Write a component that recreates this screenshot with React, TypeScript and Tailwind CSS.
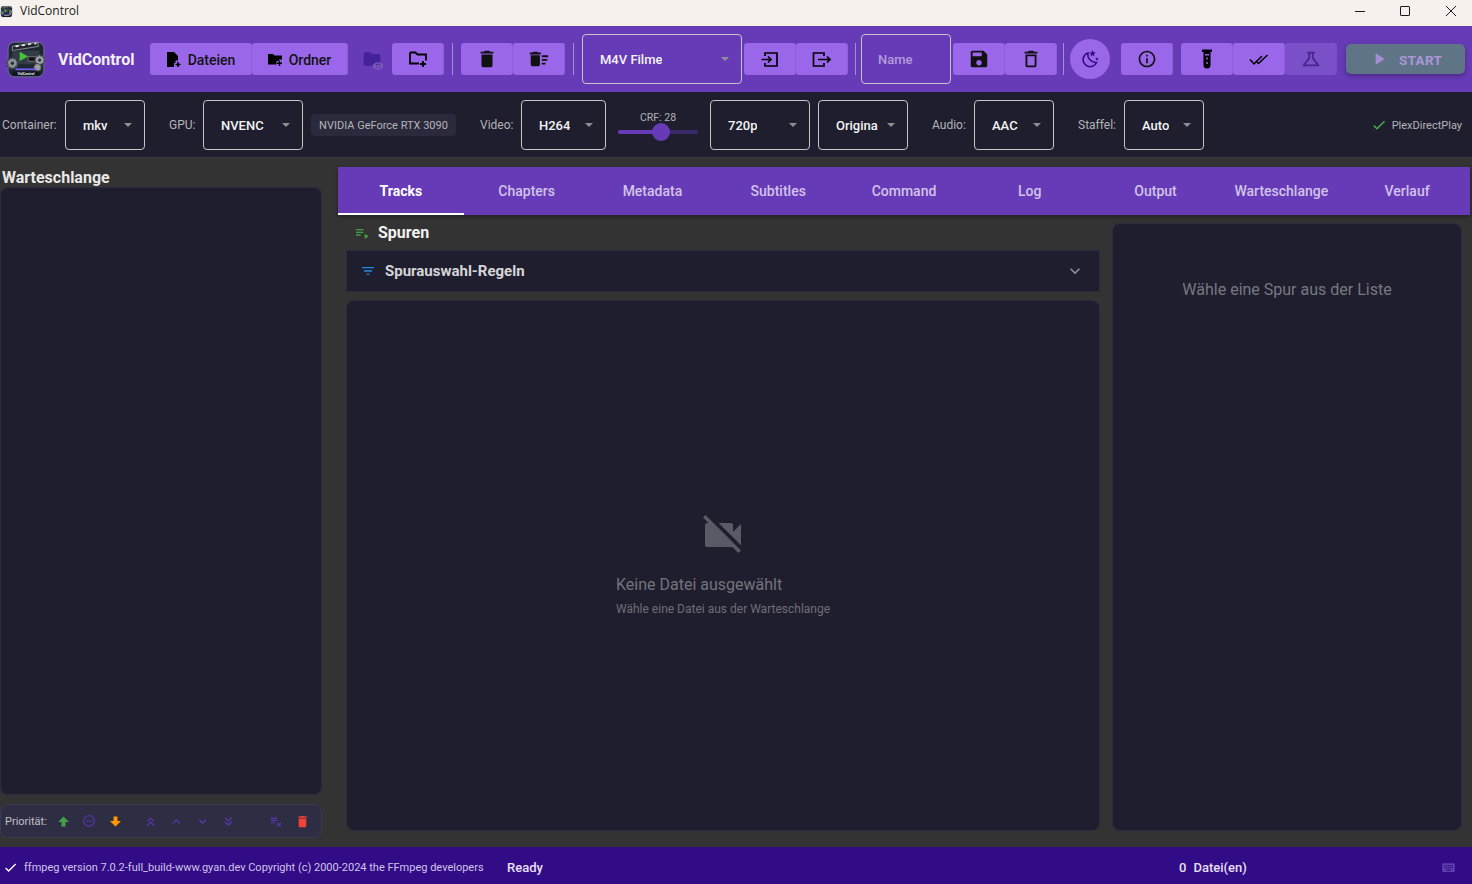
import type { ReactNode } from "react";
import {
  MdDelete,
  MdDeleteSweep,
  MdOutlineDelete,
  MdSave,
  MdOutlineInfo,
  MdOutlineScience,
  MdPlayArrow,
  MdCheck,
  MdFilterList,
  MdPlaylistPlay,
  MdVideocamOff,
  MdRemoveCircleOutline,
  MdKeyboardDoubleArrowUp,
  MdKeyboardDoubleArrowDown,
  MdKeyboardArrowUp,
  MdKeyboardArrowDown,
  MdPlaylistRemove,
  MdKeyboard,
  MdExpandMore,
  MdFolder,
  MdVisibility,
} from "react-icons/md";

const tabs = ["Tracks", "Chapters", "Metadata", "Subtitles", "Command", "Log", "Output", "Warteschlange", "Verlauf"];

const Logo = ({ size }: { size: number }) => (
  <svg width={size} height={size} viewBox="0 0 40 40">
    <rect x="3" y="4" width="34" height="33" rx="6" fill="#1d2733" stroke="#7d8791" strokeWidth="0.7" />
    <path d="M7 8 31 4l1 4-25 4z" fill="#20252b" stroke="#c8ccd0" strokeWidth="0.6" />
    <path d="M10 8l3-.5M16 7l3-.5M22 6l3-.5M28 5.500l2-.3" stroke="#e8e8e8" strokeWidth="1.600" />
    <rect x="7" y="12" width="26" height="13" fill="#333c44" />
    <path d="M14 13v9l8-4.500z" fill="#45c33a" />
    <rect x="22" y="18" width="8" height="4" fill="#111" stroke="#ccc" strokeWidth="0.4" />
    <circle cx="7" cy="24" r="5" fill="#8d9298" stroke="#3b4046" strokeWidth="2" strokeDasharray="2 1" />
    <circle cx="7" cy="24" r="1.600" fill="#2a2f35" />
    <circle cx="33" cy="21" r="4.500" fill="#9ba0a5" stroke="#444" strokeWidth="1.600" strokeDasharray="2 1" />
    <circle cx="33" cy="21" r="1.500" fill="#2a2f35" />
    <circle cx="31" cy="28" r="3.500" fill="#9ba0a5" stroke="#444" strokeWidth="1.400" strokeDasharray="2 1" />
    <rect x="10" y="29" width="20" height="1.600" fill="#7a5cf0" />
    <rect x="7" y="32" width="26" height="4" rx="1.500" fill="#0f1822" />
    <text x="20" y="35.300" fontSize="3.400" fontWeight="700" textAnchor="middle" fill="#e6e6e6" fontFamily="Roboto, sans-serif">
      VidControl
    </text>
  </svg>
);

const FileAdd = () => (
  <svg width="15" height="15" viewBox="0 0 15 15" fill="black">
    <path d="M1 0h7l4 4v4.500H9.500V11H8v4H1z" />
    <path d="M12 10v5M9.500 12.500h5" stroke="black" strokeWidth="1.500" />
  </svg>
);

const FolderAdd = () => (
  <svg width="15" height="13" viewBox="0 0 15 13" fill="black">
    <path d="M0 1h5l1.500 1.500H14V6.500h-3V8H8.500v3.500H0z" />
    <path d="M11.500 7.500v5.500M9 10.250h5" stroke="black" strokeWidth="1.500" />
  </svg>
);

const FolderAddOutline = () => (
  <svg width="18" height="16" viewBox="0 0 18 16" fill="none" stroke="black" strokeWidth="1.800">
    <path d="M1 1.500h5.500l2 2H17v6M1 1.500v11h9" />
    <path d="M14 10v6M11 13h6" />
  </svg>
);

const BoxIn = () => (
  <svg width="17" height="15" viewBox="0 0 17 15" fill="none" stroke="black" strokeWidth="1.700">
    <path d="M4 4V1h12v13H4v-3" />
    <path d="M0.500 7.500H10M7 4.500l3 3-3 3" />
  </svg>
);

const BoxOut = () => (
  <svg width="19" height="15" viewBox="0 0 19 15" fill="none" stroke="black" strokeWidth="1.700">
    <path d="M12 4V1H1.500v13H12v-3" />
    <path d="M6 7.500h12M15 4.500l3 3-3 3" />
  </svg>
);

const MoonStars = () => (
  <svg width="20" height="20" viewBox="0 0 20 20" fill="none">
    <path d="M8 4a7 7 0 1 0 8.500 9.500 8 8 0 0 1-8.500-9.500z" stroke="#320b86" strokeWidth="1.500" />
    <path d="M12.500 1l.9 2.300 2.400.2-1.800 1.500.6 2.400-2.100-1.300-2.100 1.300.6-2.400L9.200 3.500l2.400-.2zM17 8l.5 1.200 1.300.1-1 .9.300 1.300-1.100-.7-1.100.7.300-1.300-1-.9 1.300-.1z" fill="#320b86" />
  </svg>
);

const DoubleCheck = () => (
  <svg width="20" height="13" viewBox="0 0 20 13" fill="none" stroke="black" strokeWidth="1.500">
    <path d="M1 6.500l4 4.500 8-8" />
    <path d="M7 8l2.500 2.500L18.500 2" />
  </svg>
);

const TestTube = () => (
  <svg width="16" height="20" viewBox="0 0 16 20" fill="black">
    <rect x="3" y="0.500" width="10" height="2.500" />
    <path d="M4.500 3h7v13a3.500 3.500 0 0 1-7 0z" />
    <rect x="6" y="5" width="4" height="1.500" fill="#9a67ea" />
    <circle cx="8" cy="9.500" r="1" fill="#9a67ea" />
    <circle cx="8" cy="14" r="1" fill="#9a67ea" />
  </svg>
);

const ThickUp = () => (
  <svg width="11" height="11" viewBox="0 0 11 11" fill="#43a047">
    <path d="M5.500 0.500 11 6H7.500v4.500h-4V6H0z" />
  </svg>
);

const ThickDown = () => (
  <svg width="11" height="11" viewBox="0 0 11 11" fill="#ff9800">
    <path d="M5.500 10.500 11 5H7.500V0.500h-4V5H0z" />
  </svg>
);

const ToolButton = ({ children, className = "w-[52px]" }: { children: ReactNode; className?: string }) => (
  <div className={`h-8 bg-[#9a67ea] rounded-[3px] flex items-center justify-center text-[#111] border-r border-[#8f5ede] ${className}`}>
    {children}
  </div>
);

const Divider = () => <div className="w-px h-8 bg-[#a48bd2] shrink-0" />;

const Arrow = () => (
  <div className="w-0 h-0 border-x-[4px] border-x-transparent border-t-[4px] border-t-[#8e8e93] shrink-0" />
);

const Select = ({ value, className, pad = "pl-[17px]" }: { value: string; className: string; pad?: string }) => (
  <div className={`h-[50px] rounded-[4px] border border-[#c6c6c8] flex items-center justify-between pr-[12px] text-[13px] font-medium text-[#f4f4f4] shrink-0 ${pad} ${className}`}>
    <span className="overflow-hidden whitespace-nowrap pt-[2px]">{value}</span>
    <Arrow />
  </div>
);

const Label = ({ children, className = "" }: { children: ReactNode; className?: string }) => (
  <span className={`text-xs pt-[1px] text-[#b4b4b8] shrink-0 ${className}`}>{children}</span>
);

const PrioIcon = ({ children, className = "" }: { children: ReactNode; className?: string }) => (
  <div className={`w-[26px] flex justify-center ${className}`}>{children}</div>
);

export default function App() {
  return (
    <div className="h-screen w-full flex flex-col overflow-hidden bg-[#333333] font-['Roboto',sans-serif]">
      {/* window title */}
      <div className="h-[26px] bg-[#f6f1ec] flex items-center shrink-0 pb-[4px]">
        <Logo size={13} />
        <span className="ml-[7px] text-xs text-[#1a1a1a] font-['Open_Sans',sans-serif]">VidControl</span>
        <div className="ml-auto flex items-center text-[#1a1a1a]">
          <div className="w-[10px] h-px bg-[#1a1a1a] mr-[35px]" />
          <div className="w-[10px] h-[10px] border border-[#1a1a1a] rounded-[1px] mr-[35px]" />
          <svg width="12" height="12" viewBox="0 0 12 12" className="mr-[15px]">
            <path d="M1 1l10 10M11 1 1 11" stroke="#1a1a1a" strokeWidth="1" />
          </svg>
        </div>
      </div>

      {/* toolbar */}
      <div className="h-[66px] bg-[#673ab7] flex items-center shrink-0 pl-[5px]">
        <Logo size={42} />
        <span className="ml-[11px] w-[92px] pt-[2px] text-base font-bold text-[#f4f0fa]">VidControl</span>
        <ToolButton className="w-[102px] gap-[7px] text-sm font-medium">
          <FileAdd />
          <span className="pt-[1px]">Dateien</span>
        </ToolButton>
        <ToolButton className="w-[96px] gap-[6px] text-sm font-medium">
          <FolderAdd />
          <span className="pt-[1px]">Ordner</span>
        </ToolButton>
        <div className="relative w-[44px] h-8 pl-[4px] flex items-center justify-center text-[#45229a]">
          <MdFolder size={20} />
          <MdVisibility size={12} className="absolute left-[24px] top-[17px] text-[#7a5cb8]" />
        </div>
        <ToolButton>
          <FolderAddOutline />
        </ToolButton>
        <div className="w-2" />
        <Divider />
        <div className="w-2" />
        <ToolButton>
          <MdDelete size={22} />
        </ToolButton>
        <ToolButton>
          <MdDeleteSweep size={22} />
        </ToolButton>
        <div className="w-2" />
        <Divider />
        <div className="w-2" />
        <Select value="M4V Filme" className="w-[160px]" />
        <div className="w-[2px]" />
        <ToolButton>
          <BoxIn />
        </ToolButton>
        <ToolButton>
          <BoxOut />
        </ToolButton>
        <div className="w-[7px]" />
        <Divider />
        <div className="w-[5px]" />
        <div className="w-[90px] h-[50px] rounded-[4px] border border-[#c6c6c8] flex items-center pl-[16px] pt-[2px] text-[13px] font-medium text-[#b39ddb]">
          Name
        </div>
        <div className="w-[2px]" />
        <ToolButton>
          <MdSave size={22} />
        </ToolButton>
        <ToolButton>
          <MdOutlineDelete size={22} />
        </ToolButton>
        <div className="w-[6px]" />
        <Divider />
        <div className="w-[6px]" />
        <div className="w-10 h-10 rounded-full bg-[#9a67ea] flex items-center justify-center">
          <MoonStars />
        </div>
        <div className="w-[11px]" />
        <ToolButton>
          <MdOutlineInfo size={20} />
        </ToolButton>
        <div className="w-2" />
        <ToolButton>
          <TestTube />
        </ToolButton>
        <ToolButton>
          <DoubleCheck />
        </ToolButton>
        <div className="w-[52px] h-8 bg-[#7a4fc8] rounded-[3px] flex items-center justify-center text-[#45288a]">
          <MdOutlineScience size={22} />
        </div>
        <div className="w-[9px]" />
        <div className="w-[119px] h-[30px] bg-[#5f7486] rounded-[5px] shadow-[0_2px_4px_rgba(0,0,0,0.3)] flex items-center pl-[24px] text-[13.500px] font-bold text-[#ab97d6] tracking-[0.3px]">
          <MdPlayArrow size={20} className="text-[#a28ed2] -ml-[1px]" />
          <span className="ml-[10px] pt-[2px]">START</span>
        </div>
      </div>

      {/* settings row */}
      <div className="h-[66px] bg-[#1e1e2e] border-b border-[#3a3a3f] flex items-center pl-[2px] shrink-0">
        <Label className="w-[63px]">Container:</Label>
        <Select value="mkv" className="w-[80px]" />
        <Label className="ml-[24px] w-[34px]">GPU:</Label>
        <Select value="NVENC" className="w-[100px]" />
        <div className="ml-[8px] w-[145px] h-[22px] pt-[4px] rounded-[4px] bg-[#2a2a3c] flex items-center justify-center text-[11px] text-[#b4b4b8]">
          NVIDIA GeForce RTX 3090
        </div>
        <Label className="ml-[24px] w-[41px]">Video:</Label>
        <Select value="H264" className="w-[85px]" />
        <div className="ml-[12px] w-[80px] flex flex-col items-center shrink-0 -mt-[4px]">
          <span className="text-[10.500px] leading-[14px] text-[#b4b4b8]">CRF: 28</span>
          <div className="relative w-full h-[4px] mt-[5px] rounded-full bg-[#3b2a6b]">
            <div className="h-full w-[43px] rounded-full bg-[#673ab7]" />
            <div className="absolute left-[34px] -top-[7px] w-[18px] h-[18px] rounded-full bg-[#673ab7]" />
          </div>
        </div>
        <Select value="720p" className="ml-[12px] w-[100px]" />
        <Select value="Origina" className="ml-[8px] w-[90px]" />
        <Label className="ml-[24px] w-[42px]">Audio:</Label>
        <Select value="AAC" className="w-[80px]" />
        <Label className="ml-[24px] w-[46px]">Staffel:</Label>
        <Select value="Auto" className="w-[80px]" />
        <div className="ml-auto pr-[10px] pt-[1px] flex items-center gap-[5px]">
          <MdCheck size={16} className="text-[#4caf50]" />
          <span className="text-[11px] pt-[2px] text-[#b4b4b8]">PlexDirectPlay</span>
        </div>
      </div>

      {/* content */}
      <div className="flex-1 flex min-h-0">
        <div className="w-[322px] flex flex-col shrink-0 pt-[9px] pb-[9px]">
          <div className="h-5 pl-[2px] pt-[1px] flex items-center text-base font-bold text-[#e8e8e8]">Warteschlange</div>
          <div className="flex-1 bg-[#1e1e2e] border border-[#2b2b40] rounded-lg" />
          <div className="h-[34px] mt-[9px] bg-[#2d2d44] border border-[#3a3a50] rounded-lg flex items-center pl-[4px]">
            <span className="text-[11px] pt-[2px] text-[#c0c0c4] w-[45px]">Priorität:</span>
            <PrioIcon>
              <ThickUp />
            </PrioIcon>
            <PrioIcon className="text-[#5e35b1]">
              <MdRemoveCircleOutline size={14} />
            </PrioIcon>
            <PrioIcon>
              <ThickDown />
            </PrioIcon>
            <div className="w-[9px]" />
            <PrioIcon className="text-[#5e35b1]">
              <MdKeyboardDoubleArrowUp size={15} />
            </PrioIcon>
            <PrioIcon className="text-[#5e35b1]">
              <MdKeyboardArrowUp size={15} />
            </PrioIcon>
            <PrioIcon className="text-[#5e35b1]">
              <MdKeyboardArrowDown size={15} />
            </PrioIcon>
            <PrioIcon className="text-[#5e35b1]">
              <MdKeyboardDoubleArrowDown size={15} />
            </PrioIcon>
            <div className="w-[22px]" />
            <PrioIcon className="text-[#5e35b1]">
              <MdPlaylistRemove size={14} />
            </PrioIcon>
            <PrioIcon className="text-[#f44336]">
              <MdDelete size={15} />
            </PrioIcon>
          </div>
        </div>

        <div className="ml-[16px] w-[1132px] flex flex-col pt-[9px] pb-[16px]">
          <div className="h-12 grid grid-cols-9 bg-[#673ab7] shadow-[0_2px_4px_rgba(0,0,0,0.35)] shrink-0">
            {tabs.map((t, i) => (
              <div
                key={t}
                className={
                  i === 0
                    ? "flex items-center justify-center pt-[2px] text-sm font-bold text-white border-b-2 border-white"
                    : "flex items-center justify-center text-sm font-medium text-[#d1c4e9]"
                }
              >
                {t}
              </div>
            ))}
          </div>
          <div className="flex-1 flex min-h-0">
            <div className="ml-[8px] w-[754px] flex flex-col">
              <div className="h-[35px] flex items-center pl-[8px] shrink-0">
                <MdPlaylistPlay size={16} className="text-[#43a047]" />
                <span className="ml-[8px] pt-[1px] text-base font-bold text-[#f2f2f2]">Spuren</span>
              </div>
              <div className="h-[42px] bg-[#1e1e2e] border border-[#2b2b40] flex items-center pl-[13px] pr-[14px] shrink-0">
                <MdFilterList size={16} className="text-[#1e88e5]" />
                <span className="ml-[9px] pt-[1px] text-[15px] font-bold text-[#d5d5d8]">Spurauswahl-Regeln</span>
                <MdExpandMore size={20} className="ml-auto text-[#8e8e93]" />
              </div>
              <div className="flex-1 mt-[8px] bg-[#1e1e2e] border border-[#2b2b40] rounded-lg flex flex-col items-center pt-[210px]">
                <MdVideocamOff size={48} className="text-[#5a5a66]" />
                <div className="mt-[16px] w-[214px]">
                  <div className="text-base leading-[20px] text-[#74747c] whitespace-nowrap">Keine Datei ausgewählt</div>
                  <div className="mt-[6px] text-xs text-[#6e6e76] whitespace-nowrap">Wähle eine Datei aus der Warteschlange</div>
                </div>
              </div>
            </div>
            <div className="ml-[12px] w-[350px] mt-[8px] bg-[#1e1e2e] border border-[#2b2b40] rounded-lg flex justify-center pt-[56px]">
              <span className="text-base leading-[20px] text-[#787880]">Wähle eine Spur aus der Liste</span>
            </div>
          </div>
        </div>
      </div>

      {/* status */}
      <div className="h-[37px] bg-[#320b86] flex items-center pl-[3px] pt-[4px] shrink-0">
        <MdCheck size={15} className="text-white" />
        <span className="ml-[6px] mt-[1px] text-[11px] text-[#d1c4e9] whitespace-nowrap w-[483px]">
          ffmpeg version 7.0.2-full_build-www.gyan.dev Copyright (c) 2000-2024 the FFmpeg developers
        </span>
        <span className="text-[13px] font-medium text-[#e8e0f5] w-[672px]">Ready</span>
        <span className="text-[13px] font-medium text-[#e8e0f5]">0</span>
        <span className="ml-[7px] text-[13px] font-medium text-[#e8e0f5]">Datei(en)</span>
        <MdKeyboard size={15} className="ml-auto mr-[16px] text-[#5f3fae]" />
      </div>
    </div>
  );
}
